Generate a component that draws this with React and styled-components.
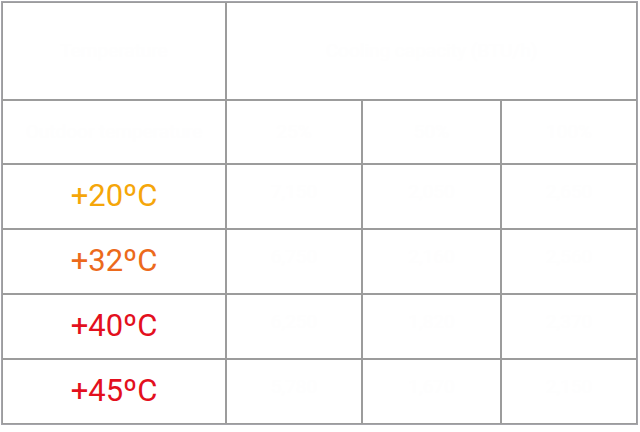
import * as React from "react";
import styled, { createGlobalStyle } from "styled-components";

const GlobalStyle = createGlobalStyle`
    html, body {
        margin: 0;
        padding: 0;
        background: #ffffff;
        font-family: Roboto, "Liberation Sans", sans-serif;
    }
`;

const rows = [
    { temp: "+20ºC", color: "#f5a60a", values: ["7,150", "2,050", "2,650"] },
    { temp: "+32ºC", color: "#ec6a1c", values: ["6,750", "2,160", "2,560"] },
    { temp: "+40ºC", color: "#e3101e", values: ["6,250", "1,820", "2,370"] },
    { temp: "+45ºC", color: "#e3101e", values: ["5,780", "1,670", "2,150"] },
];

function App() {
    return (
        <>
            <GlobalStyle />
            <Wrap>
                <Table>
                    <colgroup>
                        <col style={{ width: 224 }} />
                        <col style={{ width: 136 }} />
                        <col style={{ width: 139 }} />
                        <col style={{ width: 136 }} />
                    </colgroup>
                    <thead>
                        <tr>
                            <HeadCell $height={96}>Temperature</HeadCell>
                            <HeadCell colSpan={3} $height={96}>Cooling capacity (BTU/h)</HeadCell>
                        </tr>
                        <tr>
                            <HeadCell $height={62}>Outdoor temperature</HeadCell>
                            <HeadCell $height={62}>25%</HeadCell>
                            <HeadCell $height={62}>50%</HeadCell>
                            <HeadCell $height={62}>100%</HeadCell>
                        </tr>
                    </thead>
                    <tbody>
                        {rows.map((row) => (
                            <tr key={row.temp}>
                                <TempCell $color={row.color}>{row.temp}</TempCell>
                                {row.values.map((v, i) => (
                                    <ValueCell key={i}>{v}</ValueCell>
                                ))}
                            </tr>
                        ))}
                    </tbody>
                </Table>
            </Wrap>
        </>
    );
}

export default App;

const Wrap = styled.div`
    padding: 1px 0 0 1px;
`;

const Table = styled.table`
    width: 635px;
    table-layout: fixed;
    border-collapse: separate;
    border-spacing: 0;
    border: 1px solid #a4a4aa;
`;

const Cell = styled.td`
    border: 1px solid #9c9c9c;
    text-align: center;
    vertical-align: middle;
    padding: 0 6px;
    color: #fefefe;
    line-height: 1.15;
`;

const HeadCell = styled(Cell)`
    height: ${(p) => p.$height}px;
    font-size: 19px;
    font-weight: 400;
`;

const TempCell = styled(Cell)`
    height: 61px;
    font-size: 31px;
    color: ${(p) => p.$color};
    padding-bottom: 2px;
`;

const ValueCell = styled(Cell)`
    height: 53px;
    font-size: 19px;
    padding-bottom: 10px;
`;
